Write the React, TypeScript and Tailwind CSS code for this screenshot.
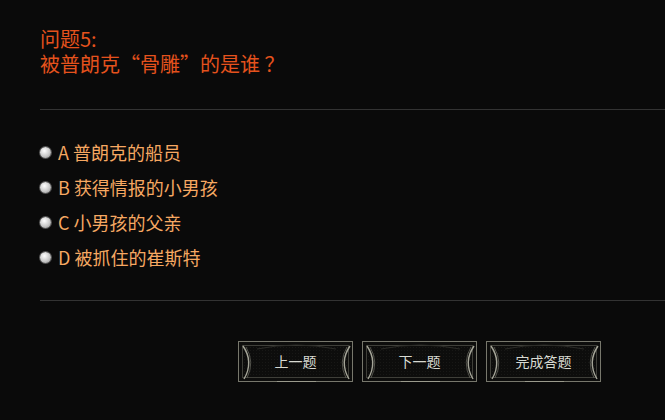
import type { ReactNode } from 'react'

const options = [
  { key: 'A', text: '普朗克的船员' },
  { key: 'B', text: '获得情报的小男孩' },
  { key: 'C', text: '小男孩的父亲' },
  { key: 'D', text: '被抓住的崔斯特' },
]

const font = { fontFamily: '"Noto Sans CJK SC", "Noto Sans", sans-serif' }

function FrameButton({ children }: { children: ReactNode }) {
  return (
    <button className="relative h-[41px] w-[115px] border border-[#77776c] bg-[#0d0d0c] p-[3px]">
      <div className="flex h-full w-full items-center justify-center border border-[#3f3f39] bg-[radial-gradient(circle,#181816_1px,transparent_1px)] bg-[length:3px_3px] text-[14px] text-[#d8dad2]">
        {children}
      </div>
      <svg
        className="pointer-events-none absolute inset-0"
        width="115"
        height="41"
        viewBox="0 0 115 41"
        fill="none"
      >
        <path d="M18 7 Q57 -1 97 7" stroke="#2c2c28" strokeWidth="1" />
        <path d="M4 4 Q15 20 5 37" stroke="#a5a598" strokeWidth="1.4" />
        <path d="M7 5 Q16 20 8 36" stroke="#5a5a52" strokeWidth="0.9" />
        <path d="M111 4 Q100 20 110 37" stroke="#a5a598" strokeWidth="1.4" />
        <path d="M108 5 Q99 20 107 36" stroke="#5a5a52" strokeWidth="0.9" />
        <path d="M38 39.5 L77 39.5" stroke="#9a9a8c" strokeWidth="1" />
      </svg>
    </button>
  )
}

export default function App() {
  return (
    <div className="min-h-[420px] w-full bg-[#0a0a0a] pl-10 pt-[26px]" style={font}>
      <h1 className="text-[20px] leading-[25px] font-normal text-[#e5521d]">
        <p>问题5:</p>
        <p>被普朗克“骨雕”的是谁 ？</p>
      </h1>

      <div className="mt-[33px] h-px bg-[#333333]" />

      <ul className="mt-[25px] flex flex-col">
        {options.map(o => (
          <li key={o.key} className="flex h-[35px] items-center gap-[7px] text-[18px] text-[#f6a862]">
            <span className="h-[11px] w-[11px] rounded-full bg-[radial-gradient(circle_at_40%_35%,#ffffff,#c8c8c8_55%,#8a8a8a)] shadow-[0_0_0_1px_#555]" />
            <span>
              {o.key} {o.text}
            </span>
          </li>
        ))}
      </ul>

      <div className="mt-[25px] h-px bg-[#333333]" />

      <div className="ml-[198px] mt-[40px] flex gap-[9px]">
        <FrameButton>上一题</FrameButton>
        <FrameButton>下一题</FrameButton>
        <FrameButton>完成答题</FrameButton>
      </div>
    </div>
  )
}
